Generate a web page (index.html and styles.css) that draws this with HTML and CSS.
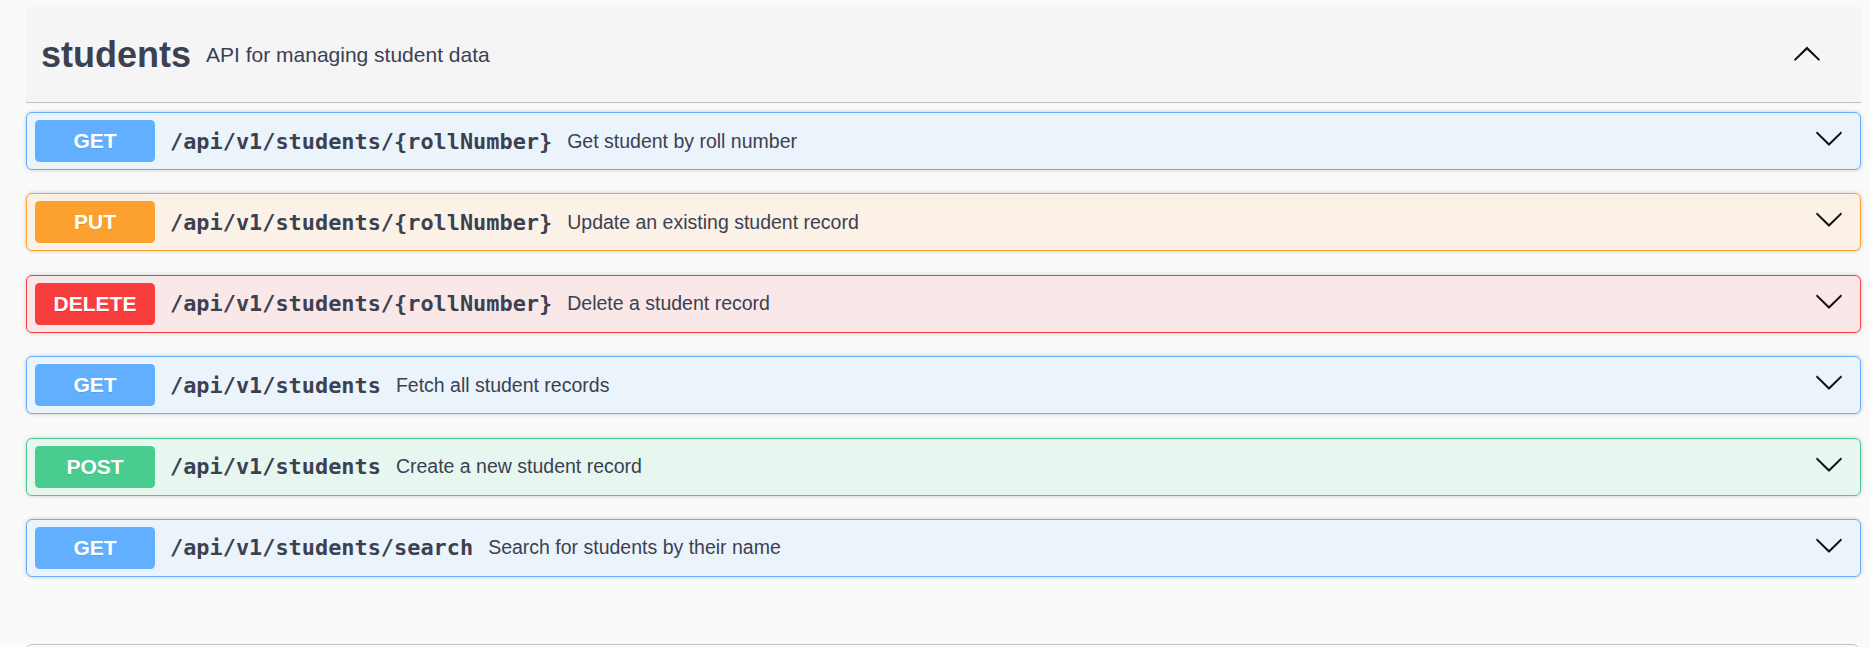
FILE: index.html
```html
<!DOCTYPE html>
<html lang="en">
<head>
<meta charset="utf-8">
<title>students API</title>
<link rel="stylesheet" href="styles.css">
</head>
<body>
<div class="wrapper">
  <section class="tag-section">
    <div class="tag-header">
      <h3 class="tag-title">students <small class="tag-desc">API for managing student data</small></h3>
      <button class="tag-toggle" aria-label="Collapse operation">
        <svg class="arrow" viewBox="0 0 20 20" width="30" height="30"><path d="M17.418 14.908c.272.268.709.268.979 0s.271-.701 0-.969l-7.908-7.83c-.27-.268-.707-.268-.979 0l-7.908 7.83c-.27.268-.27.701 0 .969.271.268.709.268.979 0L10 7.767l7.418 7.141z"/></svg>
      </button>
    </div>
    <div class="ops">
      <div class="opblock get">
        <span class="method">GET</span>
        <span class="path">/api/v1/students/{rollNumber}</span>
        <span class="desc">Get student by roll number</span>
        <svg class="arrow op-arrow" viewBox="0 0 20 20" width="30" height="30"><path d="M17.418 6.109c.272-.268.709-.268.979 0s.271.701 0 .969l-7.908 7.83c-.27.268-.707.268-.979 0l-7.908-7.83c-.27-.268-.27-.701 0-.969.271-.268.709-.268.979 0L10 13.25l7.418-7.141z"/></svg>
      </div>
      <div class="opblock put">
        <span class="method">PUT</span>
        <span class="path">/api/v1/students/{rollNumber}</span>
        <span class="desc">Update an existing student record</span>
        <svg class="arrow op-arrow" viewBox="0 0 20 20" width="30" height="30"><path d="M17.418 6.109c.272-.268.709-.268.979 0s.271.701 0 .969l-7.908 7.83c-.27.268-.707.268-.979 0l-7.908-7.83c-.27-.268-.27-.701 0-.969.271-.268.709-.268.979 0L10 13.25l7.418-7.141z"/></svg>
      </div>
      <div class="opblock delete">
        <span class="method">DELETE</span>
        <span class="path">/api/v1/students/{rollNumber}</span>
        <span class="desc">Delete a student record</span>
        <svg class="arrow op-arrow" viewBox="0 0 20 20" width="30" height="30"><path d="M17.418 6.109c.272-.268.709-.268.979 0s.271.701 0 .969l-7.908 7.83c-.27.268-.707.268-.979 0l-7.908-7.83c-.27-.268-.27-.701 0-.969.271-.268.709-.268.979 0L10 13.25l7.418-7.141z"/></svg>
      </div>
      <div class="opblock get">
        <span class="method">GET</span>
        <span class="path">/api/v1/students</span>
        <span class="desc">Fetch all student records</span>
        <svg class="arrow op-arrow" viewBox="0 0 20 20" width="30" height="30"><path d="M17.418 6.109c.272-.268.709-.268.979 0s.271.701 0 .969l-7.908 7.83c-.27.268-.707.268-.979 0l-7.908-7.83c-.27-.268-.27-.701 0-.969.271-.268.709-.268.979 0L10 13.25l7.418-7.141z"/></svg>
      </div>
      <div class="opblock post">
        <span class="method">POST</span>
        <span class="path">/api/v1/students</span>
        <span class="desc">Create a new student record</span>
        <svg class="arrow op-arrow" viewBox="0 0 20 20" width="30" height="30"><path d="M17.418 6.109c.272-.268.709-.268.979 0s.271.701 0 .969l-7.908 7.83c-.27.268-.707.268-.979 0l-7.908-7.83c-.27-.268-.27-.701 0-.969.271-.268.709-.268.979 0L10 13.25l7.418-7.141z"/></svg>
      </div>
      <div class="opblock get">
        <span class="method">GET</span>
        <span class="path">/api/v1/students/search</span>
        <span class="desc">Search for students by their name</span>
        <svg class="arrow op-arrow" viewBox="0 0 20 20" width="30" height="30"><path d="M17.418 6.109c.272-.268.709-.268.979 0s.271.701 0 .969l-7.908 7.83c-.27.268-.707.268-.979 0l-7.908-7.830c-.27-.268-.27-.701 0-.969.271-.268.709-.268.979 0L10 13.25l7.418-7.141z"/></svg>
      </div>
    </div>
  </section>
  <section class="models"></section>
</div>
</body>
</html>
```

FILE: styles.css
```css
html, body {
  margin: 0;
  padding: 0;
  background: #fafafa;
  overflow: hidden;
}

body {
  font-family: "Liberation Sans", Arial, sans-serif;
  color: #3b4151;
}

.wrapper {
  padding: 7px 10px 0 26px;
}

.tag-header {
  display: flex;
  align-items: center;
  box-sizing: border-box;
  height: 96px;
  padding: 0 39px 0 15px;
  background: #f5f5f5;
  border-bottom: 1px solid rgba(59, 65, 81, 0.3);
  margin-bottom: 9px;
}

.tag-title {
  flex: 1;
  display: flex;
  align-items: center;
  margin: 0;
  font-size: 36px;
  font-weight: 700;
  color: #3b4151;
}

.tag-desc {
  font-size: 21px;
  font-weight: 400;
  padding-left: 15px;
  color: #3b4151;
}

.tag-toggle {
  display: flex;
  align-items: center;
  border: 0;
  background: none;
  padding: 0;
  margin: 0 0 3px;
}

.arrow {
  display: block;
  fill: #111;
}

.ops {
  padding-bottom: 0.1px;
}

.opblock {
  display: flex;
  align-items: center;
  box-sizing: border-box;
  height: 58px;
  padding: 0 16px 0 8px;
  margin-bottom: 23.4px;
  border: 1px solid;
  border-radius: 6px;
  box-shadow: 0 0 4px rgba(0, 0, 0, 0.19);
}

.method {
  flex: none;
  box-sizing: border-box;
  width: 120px;
  height: 42px;
  display: flex;
  align-items: center;
  justify-content: center;
  border-radius: 4.5px;
  color: #fff;
  font-size: 21px;
  font-weight: 700;
  text-shadow: 0 1px 0 rgba(0, 0, 0, 0.1);
}

.path {
  padding-left: 15px;
  font-family: "DejaVu Sans Mono", "Liberation Mono", monospace;
  font-size: 21.9px;
  font-weight: 700;
  color: #3b4151;
}

.desc {
  flex: 1;
  padding-left: 15px;
  font-size: 19.5px;
  color: #3b4151;
}

.op-arrow {
  margin-bottom: 6px;
}

.get { background: #ebf3fb; border-color: #61affe; }
.get .method { background: #61affe; }

.put { background: #fbf1e6; border-color: #fca130; }
.put .method { background: #fca130; }

.delete { background: #fae7e7; border-color: #f93e3e; }
.delete .method { background: #f93e3e; }

.post { background: #e8f6f0; border-color: #49cc90; }
.post .method { background: #49cc90; }

.models {
  margin: 44px 2px 0 0;
  height: 120px;
  border: 1px solid rgba(59, 65, 81, 0.3);
  border-radius: 6px;
}
```
